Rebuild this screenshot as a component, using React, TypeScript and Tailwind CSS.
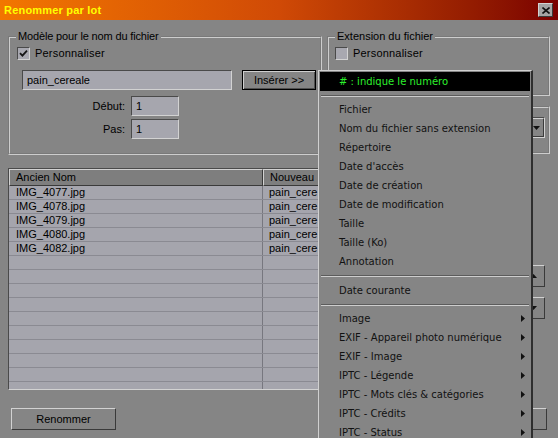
import type { ReactNode } from 'react'

const files = ['IMG_4077.jpg', 'IMG_4078.jpg', 'IMG_4079.jpg', 'IMG_4080.jpg', 'IMG_4082.jpg']

const fields = [
  'Fichier',
  'Nom du fichier sans extension',
  'Répertoire',
  "Date d'accès",
  'Date de création',
  'Date de modification',
  'Taille',
  'Taille (Ko)',
  'Annotation',
]

const groups = [
  'Image',
  'EXIF - Appareil photo numérique',
  'EXIF - Image',
  'IPTC - Légende',
  'IPTC - Mots clés & catégories',
  'IPTC - Crédits',
  'IPTC - Status',
]

const sunken = 'border border-t-[#4a4a4a] border-l-[#4a4a4a] border-r-[#d2d2d2] border-b-[#d2d2d2]'
const raised = 'border border-t-[#d2d2d2] border-l-[#d2d2d2] border-r-[#3a3a3a] border-b-[#3a3a3a]'

function Checkbox({ checked }: { checked?: boolean }) {
  return (
    <span className={`flex h-[13px] w-[13px] shrink-0 items-center justify-center bg-[#a8a8b0] ${sunken}`}>
      {checked && (
        <svg width="9" height="9" viewBox="0 0 9 9">
          <path d="M1 4.2 L3.4 6.6 L8 1.6" stroke="#151515" strokeWidth="1.8" fill="none" />
        </svg>
      )}
    </span>
  )
}

function Field({ value, className }: { value: string; className: string }) {
  return (
    <div className={`flex h-[20px] items-center bg-[#a6a6ae] pl-[4px] ${sunken} ${className}`}>{value}</div>
  )
}

function Arrow({ dir }: { dir: 'up' | 'down' }) {
  return (
    <svg width="7" height="4" viewBox="0 0 7 4">
      <path d={dir === 'down' ? 'M0 0 L7 0 L3.5 4 Z' : 'M0 4 L7 4 L3.5 0 Z'} fill="#111" />
    </svg>
  )
}

function MenuItem({ children, sub }: { children: ReactNode; sub?: boolean }) {
  return (
    <div className="flex h-[19px] items-center justify-between pl-[20px] pr-[6px]">
      <span>{children}</span>
      {sub && (
        <svg width="4" height="7" viewBox="0 0 4 7">
          <path d="M0 0 L4 3.5 L0 7 Z" fill="#111" />
        </svg>
      )}
    </div>
  )
}

function Separator({ h }: { h: string }) {
  return (
    <div className={`flex items-center px-[2px] ${h}`}>
      <div className="w-full border-t border-b border-t-[#5c5c5c] border-b-[#cdcdcd]" />
    </div>
  )
}

export default function App() {
  return (
    <div className="relative h-[438px] w-[558px] overflow-hidden bg-[#858585] font-['Liberation_Sans',Arial,sans-serif] text-[11px] text-black">
      <div className="flex h-[20px] items-center justify-between bg-linear-to-r from-[#f27600] via-[#d04a06] to-[#7a0000] pl-[4px] pr-[5px]">
        <span className="text-[11px] font-bold tracking-[0.2px] text-[#ffff00]">Renommer par lot</span>
        <span className={`flex h-[14px] w-[15px] items-center justify-center bg-[#a4a4a4] ${raised}`}>
          <svg width="8" height="7" viewBox="0 0 8 7">
            <path d="M0.5 0.5 L7.5 6.5 M7.5 0.5 L0.5 6.5" stroke="#111" strokeWidth="1.6" />
          </svg>
        </span>
      </div>

      <div className="px-[8px]">
        <div className="mt-[10px] flex gap-[5px]">
          <fieldset className="h-[125px] w-[314px] border-2 border-[#cdcdcd] pl-[7px] pr-[4px] [border-style:groove]">
            <legend className="-ml-[1px] px-[2px] leading-[13px] tracking-[-0.15px]">Modèle pour le nom du fichier</legend>
            <div className="mt-[4px] flex h-[13px] items-center gap-[5px]">
              <Checkbox checked />
              <span className="tracking-[0.2px]">Personnaliser</span>
            </div>
            <div className="mt-[10px] flex items-center">
              <Field value="pain_cereale" className="ml-[5px] w-[210px]" />
              <button
                type="button"
                className="ml-[10px] h-[20px] w-[74px] border border-black bg-[#858585] text-[11px] shadow-[inset_1px_1px_0_#cfcfcf,inset_-1px_-1px_0_#505050]"
              >
                Insérer &gt;&gt;
              </button>
            </div>
            <div className="mt-[6px] flex items-center">
              <span className="w-[108px] text-right">Début:</span>
              <Field value="1" className="ml-[6px] w-[48px]" />
            </div>
            <div className="mt-[3px] flex items-center">
              <span className="w-[108px] text-right">Pas:</span>
              <Field value="1" className="ml-[6px] w-[48px]" />
            </div>
          </fieldset>

          <div className="flex flex-col">
            <fieldset className="h-[66px] w-[223px] border-2 border-[#cdcdcd] pl-[7px] [border-style:groove]">
              <legend className="-ml-[1px] px-[2px] leading-[13px]">Extension du fichier</legend>
              <div className="-ml-[1px] mt-[4px] flex h-[13px] items-center gap-[5px]">
                <Checkbox />
                <span className="tracking-[0.2px]">Personnaliser</span>
              </div>
            </fieldset>
            <div className="mt-[10px] h-[48px] w-[223px] border-2 border-[#cdcdcd] [border-style:groove]">
              <div className={`ml-[6px] mt-[9px] flex h-[21px] w-[210px] bg-[#a6a6ae] ${sunken}`}>
                <span className="flex-1" />
                <span className={`flex w-[16px] items-center justify-center bg-[#858585] ${raised}`}>
                  <Arrow dir="down" />
                </span>
              </div>
            </div>
          </div>
        </div>

        <div className="mt-[13px] flex">
          <div className={`h-[222px] w-[506px] overflow-hidden bg-[#a5a5ad] ${sunken}`}>
            <div className="flex h-[17px] bg-[#7e7e7e]">
              <div className={`w-[254px] pl-[6px] leading-[15px] ${raised}`}>Ancien Nom</div>
              <div className={`flex-1 pl-[6px] leading-[15px] ${raised}`}>Nouveau</div>
            </div>
            {Array.from({ length: 15 }, (_, i) => (
              <div key={i} className="flex h-[14px] border-b border-[#8a8a92] leading-[13px]">
                <div className="w-[254px] border-r border-[#77777f] pl-[7px]">{files[i] ?? ''}</div>
                <div className="flex-1 pl-[6px]">{files[i] ? 'pain_cere' : ''}</div>
              </div>
            ))}
          </div>
          <div className="ml-[7px] mt-[97px] flex flex-col gap-[10px]">
            <span className={`flex h-[22px] w-[24px] items-center justify-center bg-[#858585] ${raised}`}>
              <Arrow dir="up" />
            </span>
            <span className={`flex h-[22px] w-[24px] items-center justify-center bg-[#858585] ${raised}`}>
              <Arrow dir="down" />
            </span>
          </div>
        </div>

        <div className="mt-[18px] flex justify-between px-[3px]">
          <button type="button" className={`h-[22px] w-[105px] bg-[#858585] text-[11px] ${raised}`}>
            Renommer
          </button>
          <button type="button" aria-label="Fermer" className={`h-[22px] w-[105px] bg-[#858585] ${raised}`} />
        </div>
      </div>

      <div className="absolute left-[318px] top-[70px] h-[380px] w-[215px] border-l border-t border-r-2 border-l-[#d0d0d0] border-t-[#d0d0d0] border-r-[#2e2e2e] bg-[#858585] pt-[1px] font-['DejaVu_Sans',Verdana,sans-serif] text-[10px] text-[#111]">
        <div className="mx-[1px] flex h-[19px] items-center bg-black pl-[19px] text-[#2cf02c]">
          # : indique le numéro
        </div>
        <Separator h="h-[9px]" />
        {fields.map((f) => (
          <MenuItem key={f}>{f}</MenuItem>
        ))}
        <Separator h="h-[10px]" />
        <MenuItem>Date courante</MenuItem>
        <Separator h="h-[9px]" />
        {groups.map((g) => (
          <MenuItem key={g} sub>
            {g}
          </MenuItem>
        ))}
      </div>
    </div>
  )
}
